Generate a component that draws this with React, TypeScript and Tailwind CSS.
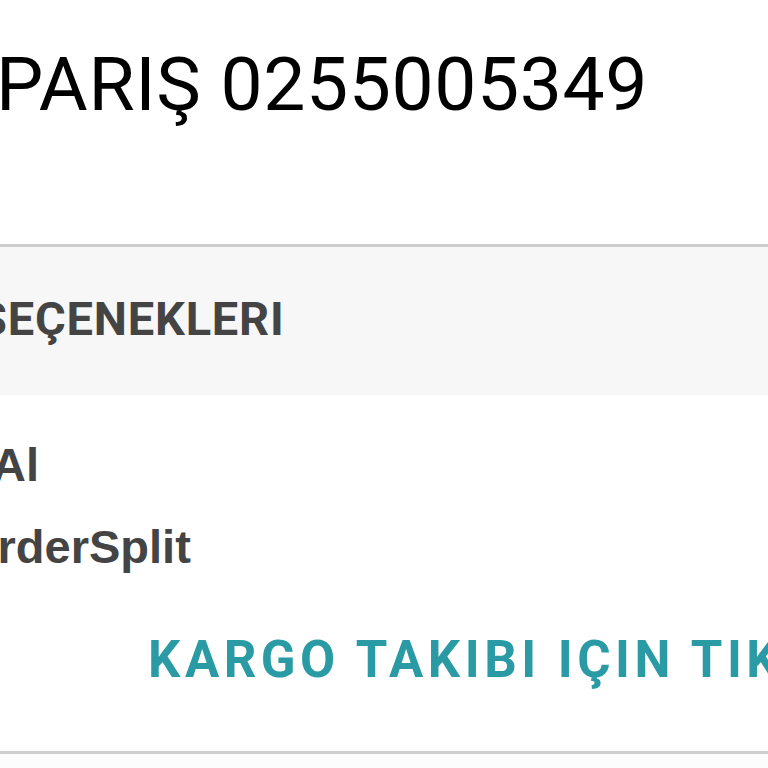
export default function App() {
  return (
    <div className="h-[768px] w-[768px] overflow-hidden bg-white" style={{ fontFamily: 'Roboto, "Liberation Sans", sans-serif' }}>
      <div className="h-[244px] pt-[47px]">
        <h1 className="ml-[-4px] whitespace-nowrap text-[75px] font-normal leading-[75px] tracking-[0.6px] text-black">
          PARIŞ 0255005349
        </h1>
      </div>

      <div className="h-[3px] bg-[#cdcdcd]" />

      <div className="flex h-[148px] items-center bg-[#f7f7f7]">
        <h2 className="ml-[-22px] mt-[-6px] whitespace-nowrap text-[47px] font-bold leading-none tracking-[0.8px] text-[#444444]">
          SEÇENEKLERI
        </h2>
      </div>

      <div
        className="flex h-[356px] flex-col text-[#444444]"
        style={{ fontFamily: '"Liberation Sans", Arial, sans-serif' }}
      >
        <div className="mt-[46px] ml-[-8px] whitespace-nowrap text-[47px] font-bold leading-none">Al</div>
        <div className="mt-[35px] ml-[-39px] whitespace-nowrap text-[47px] font-bold leading-none">OrderSplit</div>
        <div
          className="mt-[64px] ml-[148px] whitespace-nowrap text-[51px] font-bold leading-none tracking-[4.5px] text-[#2a9ba4]"
          style={{ fontFamily: 'Roboto, "Liberation Sans", sans-serif' }}
        >
          KARGO TAKIBI IÇIN TIKLAYIN
        </div>
      </div>

      <div className="h-[3px] bg-[#cdcdcd]" />
      <div className="h-[20px] bg-[#fcfcfc]" />
    </div>
  );
}
